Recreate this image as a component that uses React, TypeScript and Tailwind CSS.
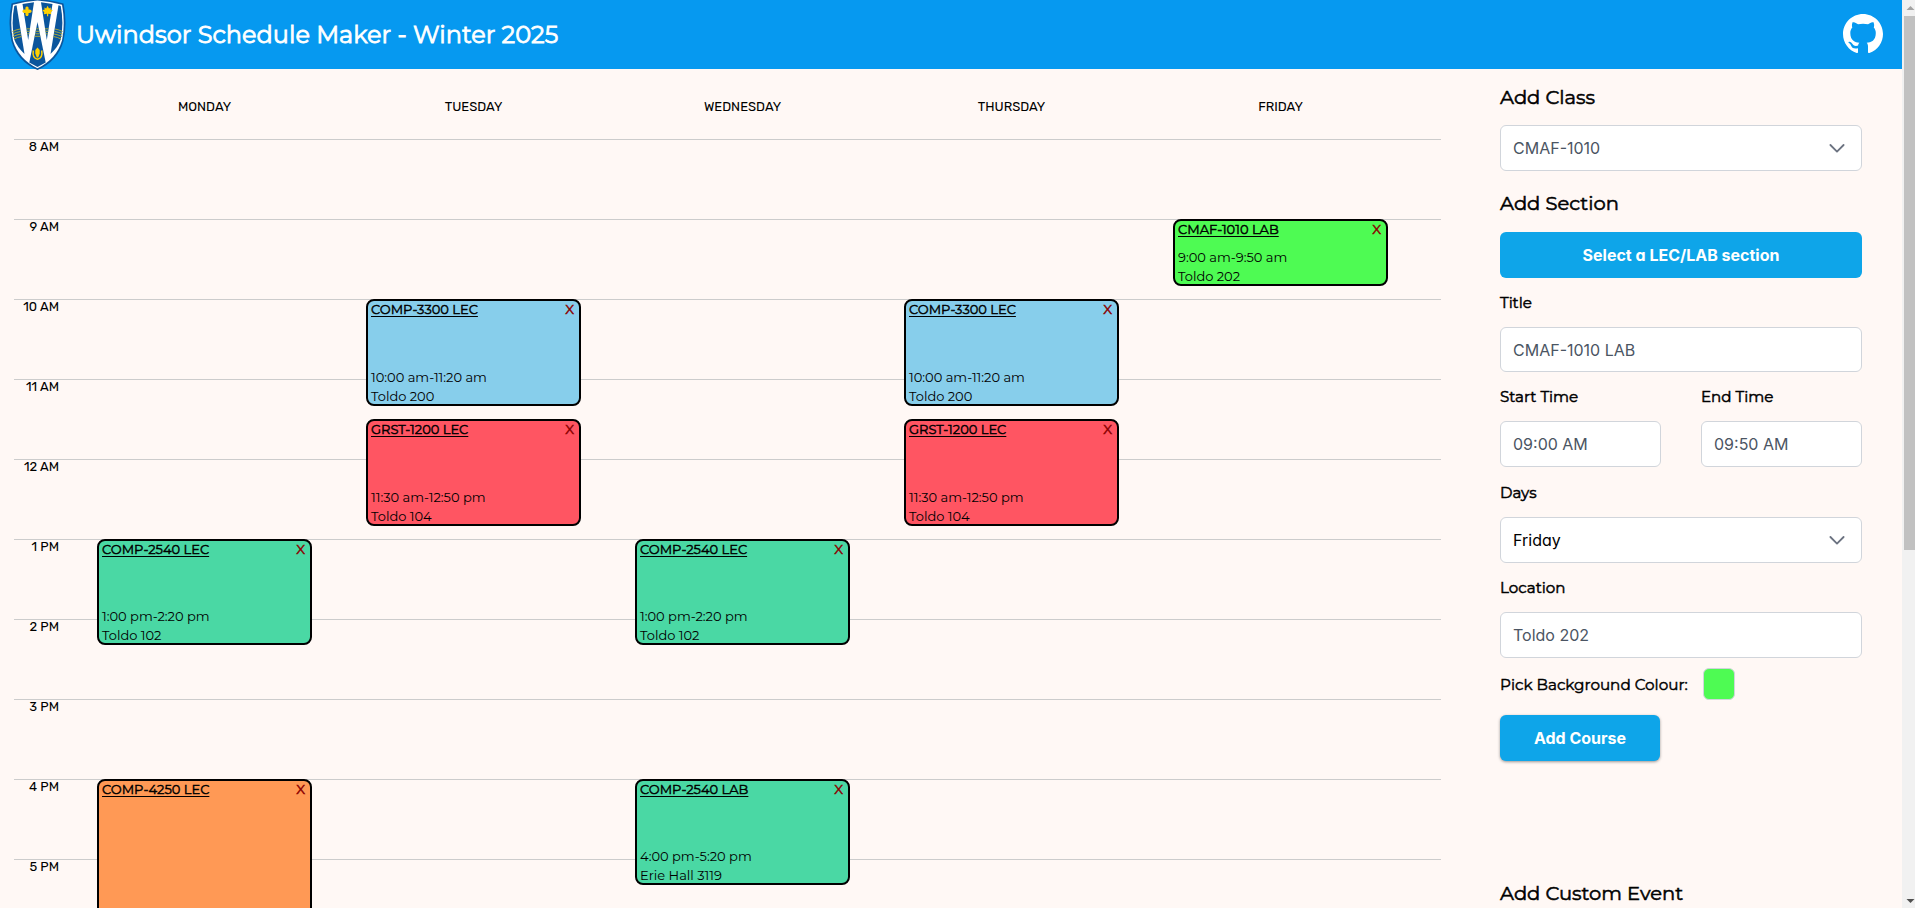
import type { ReactNode } from "react";

type Course = { title: string; day: number; start: number; end: number; time: string; place: string; color: string };

const DAYS = ["MONDAY", "TUESDAY", "WEDNESDAY", "THURSDAY", "FRIDAY"];
const HOURS = ["8 AM", "9 AM", "10 AM", "11 AM", "12 AM", "1 PM", "2 PM", "3 PM", "4 PM", "5 PM"];

// start and end are minutes after midnight
const COURSES: Course[] = [
  { title: "COMP-2540 LEC", day: 0, start: 780, end: 860, time: "1:00 pm-2:20 pm", place: "Toldo 102", color: "bg-[#4ad8a4]" },
  { title: "COMP-4250 LEC", day: 0, start: 960, end: 1130, time: "", place: "", color: "bg-[#ff9955]" },
  { title: "COMP-3300 LEC", day: 1, start: 600, end: 680, time: "10:00 am-11:20 am", place: "Toldo 200", color: "bg-[#87ceeb]" },
  { title: "GRST-1200 LEC", day: 1, start: 690, end: 770, time: "11:30 am-12:50 pm", place: "Toldo 104", color: "bg-[#ff5562]" },
  { title: "COMP-2540 LEC", day: 2, start: 780, end: 860, time: "1:00 pm-2:20 pm", place: "Toldo 102", color: "bg-[#4ad8a4]" },
  { title: "COMP-2540 LAB", day: 2, start: 960, end: 1040, time: "4:00 pm-5:20 pm", place: "Erie Hall 3119", color: "bg-[#4ad8a4]" },
  { title: "COMP-3300 LEC", day: 3, start: 600, end: 680, time: "10:00 am-11:20 am", place: "Toldo 200", color: "bg-[#87ceeb]" },
  { title: "GRST-1200 LEC", day: 3, start: 690, end: 770, time: "11:30 am-12:50 pm", place: "Toldo 104", color: "bg-[#ff5562]" },
  { title: "CMAF-1010 LAB", day: 4, start: 540, end: 590, time: "9:00 am-9:50 am", place: "Toldo 202", color: "bg-[#4efb53]" },
];

function Crest() {
  return (
    <svg className="h-[70px] w-[57px] shrink-0" viewBox="0 0 57 70">
      <path d="M2.500 3.500Q15 0 28.500 -1Q42 0 54.500 3.500Q58.500 23 54.500 41Q49 61 28.500 70Q8 61 2.500 41Q-1.500 23 2.500 3.500Z" fill="#0b559c" />
      <path d="M4 4.800Q16 1.500 28.500 0.500Q41 1.500 53 4.800Q56.500 23 53 40.500Q47.500 59 28.500 68.300Q9.500 59 4 40.500Q0.500 23 4 4.800Z" fill="#fff" />
      <path d="M5.300 6L7.500 5.300L15.500 54Q8 47 5.300 39.500Q2 23 5.300 6Z" fill="#0b559c" />
      <path d="M51.700 6L49.500 5.300L41.500 54Q49 47 51.700 39.500Q55 23 51.700 6Z" fill="#0b559c" />
      <path d="M13.500 4L25 2.300L19.200 40Z" fill="#0b559c" />
      <path d="M32 2.300L43.500 4L37.800 40Z" fill="#0b559c" />
      <path d="M28.500 22L36.700 62.500L28.500 67L20.300 62.500Z" fill="#0b559c" />
      <g fill="none" stroke="#a9a83c" strokeWidth="1">
        <path d="M3.500 31.500Q7 29.700 11 29M3.500 34Q7 32.200 11.500 31.500M4 36.500Q8 34.700 12 34M5 39Q8.500 37.200 12.500 36.500" />
        <path d="M17.500 28.800H21M17.800 31.300H20.600M18.200 33.800H20.200" />
        <path d="M53.500 31.500Q50 29.700 46 29M53.500 34Q50 32.200 45.500 31.500M53 36.500Q49 34.700 45 34M52 39Q48.500 37.200 44.500 36.500" />
        <path d="M39.500 28.800H36M39.200 31.300H36.400M38.800 33.800H36.800" />
        <path d="M27.200 28.800H29.800M26.700 31.300H30.300M26.200 33.800H30.800M25.700 36.300H31.300" />
      </g>
      <path d="M18 6.500q2 0 1.500 3q3-.5 3.200 1.700q-.2 2.200-3.200 1.700q.5 3-1.500 3.200q-2-.2-1.500-3.200q-3 .5-3.200-1.700q.2-2.200 3.200-1.700q-.5-3 1.500-3Z" fill="#ffd100" />
      <path d="M38.600 5.800l1.400 2.700l1.800-1l-.2 2.300l2.200.2l-1.900 2.400l.5 1.800l-3.200-.4v2.500h-1.200v-2.500l-3.200.4l.5-1.800l-1.900-2.400l2.200-.2l-.2-2.300l1.800 1Z" fill="#ffd100" />
      <path d="M28.500 47.500l2.200 2.500v3.500l-1.500 4h-1.400l-1.500-4v-3.500Z" fill="#ffd100" />
      <path d="M24.300 50.500Q23 58 28.500 59.200Q34 58 32.700 50.500" fill="none" stroke="#ffd100" strokeWidth="1.500" />
    </svg>
  );
}

function GithubMark() {
  return (
    <svg className="mt-[14px] h-10 w-10" viewBox="0 0 16 16" fill="#fff">
      <path d="M8 0C3.58 0 0 3.58 0 8c0 3.54 2.29 6.53 5.47 7.59.4.07.55-.17.55-.38 0-.19-.01-.82-.01-1.49-2.01.37-2.53-.49-2.69-.94-.09-.23-.48-.94-.82-1.13-.28-.15-.68-.52-.01-.53.63-.01 1.08.58 1.23.82.72 1.21 1.87.87 2.33.66.07-.52.28-.87.51-1.07-1.78-.2-3.64-.89-3.64-3.95 0-.87.31-1.59.82-2.15-.08-.2-.36-1.02.08-2.12 0 0 .67-.21 2.2.82.64-.18 1.32-.27 2-.27.68 0 1.36.09 2 .27 1.53-1.04 2.2-.82 2.2-.82.44 1.1.16 1.92.08 2.12.51.56.82 1.27.82 2.15 0 3.07-1.87 3.75-3.65 3.95.29.25.54.73.54 1.48 0 1.07-.01 1.93-.01 2.2 0 .21.15.46.55.38A8.01 8.01 0 0 0 16 8c0-4.42-3.58-8-8-8Z" />
    </svg>
  );
}

function CourseBlock({ course }: { course: Course }) {
  const row = (m: number) => (m - 480) / 10 + 1;
  return (
    <div
      className={`mx-auto flex w-[215px] flex-col justify-between rounded-lg border-2 border-black pr-[5px] pl-[3px] text-[13px] leading-[19px] whitespace-nowrap ${course.color}`}
      style={{ gridRow: `${row(course.start)} / ${row(course.end)}`, gridColumn: course.day + 1 }}
    >
      <div className="-mt-px flex justify-between">
        <span className="underline underline-offset-2 [-webkit-text-stroke:0.45px_#000]">{course.title}</span>
        <span className="text-[13.5px] text-[#8b0000] [-webkit-text-stroke:0.45px_#8b0000]">X</span>
      </div>
      <div className="-mb-[2px]">
        <div>{course.time}</div>
        <div>{course.place}</div>
      </div>
    </div>
  );
}

function Calendar() {
  return (
    <section className="ml-[14px] w-[1427px] shrink-0">
      <div className="ml-14 grid h-[70px] w-[1345px] grid-cols-5 items-center pt-[6px] text-center font-[Rubik,Roboto,sans-serif] text-[13px]">
        {DAYS.map((d) => <div key={d}>{d}</div>)}
      </div>
      <div className="grid">
        <div className="col-start-1 row-start-1">
          {HOURS.map((h) => (
            <div key={h} className="h-20 border-t border-[#cccccc]">
              <div className="w-[45px] text-right font-[Rubik,Roboto,sans-serif] text-[13px] leading-[13px]">{h}</div>
            </div>
          ))}
        </div>
        <div className="col-start-1 row-start-1 ml-14 grid w-[1345px] grid-cols-5 grid-rows-[repeat(66,13.3333px)]">
          {COURSES.map((c) => <CourseBlock key={`${c.day}-${c.start}`} course={c} />)}
        </div>
      </div>
    </section>
  );
}

function Field({ children, chevron, dark }: { children: ReactNode; chevron?: boolean; dark?: boolean }) {
  return (
    <div className={`flex h-[46px] w-full items-center justify-between rounded-md border border-[#d1d5db] bg-white pr-3 pl-3 font-[Inter,sans-serif] text-base font-normal [font-feature-settings:'cv11'] ${dark ? "text-black" : "text-[#4b5563]"}`}>
      <span>{children}</span>
      {chevron && (
        <svg className="h-6 w-6" viewBox="0 0 20 20" fill="none" stroke="#6b7280" strokeWidth="1.500" strokeLinecap="round" strokeLinejoin="round">
          <path d="M4.500 7.500l5.500 5.500 5.500-5.500" />
        </svg>
      )}
    </div>
  );
}

const HEADING = "text-[19.5px] font-normal whitespace-nowrap [-webkit-text-stroke:0.55px_#000]";
const LABEL = "block text-[15.1px] leading-6 [-webkit-text-stroke:0.5px_#000]";
const BUTTON = "h-[46px] rounded-md bg-[#0ea5e9] font-[Inter,sans-serif] text-base font-bold text-white [font-feature-settings:'cv11']";

function Sidebar() {
  return (
    <aside className="ml-[59px] flex w-[362px] shrink-0 flex-col">
      <h2 className={`mt-[13px] h-[43px] leading-[30px] ${HEADING}`}>Add Class</h2>
      <Field chevron>CMAF-1010</Field>
      <h2 className={`mt-[17px] h-[44px] leading-[30px] ${HEADING}`}>Add Section</h2>
      <button className={BUTTON}>Select a LEC/LAB section</button>
      <label className={`mt-[13px] h-9 ${LABEL}`}>Title</label>
      <Field>CMAF-1010 LAB</Field>
      <div className="flex justify-between">
        <div className="w-[161px]">
          <label className={`mt-[13px] h-9 ${LABEL}`}>Start Time</label>
          <Field>09:00 AM</Field>
        </div>
        <div className="w-[161px]">
          <label className={`mt-[13px] h-9 ${LABEL}`}>End Time</label>
          <Field>09:50 AM</Field>
        </div>
      </div>
      <label className={`mt-[14px] h-9 ${LABEL}`}>Days</label>
      <Field chevron dark>Friday</Field>
      <label className={`mt-[13px] h-9 ${LABEL}`}>Location</label>
      <Field>Toldo 202</Field>
      <div className="mt-[10px] flex h-8 items-center">
        <label className="mt-[2px] w-[203px] text-[15.2px] whitespace-nowrap [-webkit-text-stroke:0.45px_#000]">Pick Background Colour:</label>
        <div className="h-8 w-8 rounded-md border border-[#d1d5db] bg-[#4efb53]" />
      </div>
      <button className={`mt-[15px] w-40 shadow-[0_1px_3px_rgba(0,0,0,0.4)] ${BUTTON}`}>Add Course</button>
      <h2 className={`mt-[117px] leading-[30px] ${HEADING}`}>Add Custom Event</h2>
    </aside>
  );
}

function Scrollbar() {
  return (
    <div className="flex h-full w-[13px] shrink-0 flex-col items-end justify-between bg-[#f1f1f1]">
      <div>
        <svg className="block h-4 w-[11px]" viewBox="0 0 11 16"><path d="M2.500 10L6.500 6L10.500 10Z" fill="#a3a3a3" /></svg>
        <div className="h-[534px] w-[11px] bg-[#c1c1c1]" />
      </div>
      <svg className="h-4 w-[11px]" viewBox="0 0 11 16"><path d="M2.500 7L6.500 11L10.500 7Z" fill="#505050" /></svg>
    </div>
  );
}

export default function App() {
  return (
    <div className="flex h-[908px] w-[1915px] overflow-hidden bg-[#fff8f5] font-[Montserrat,Inter,sans-serif] text-black">
      <div className="flex h-full w-[1902px] shrink-0 flex-col">
        <header className="flex h-[69px] shrink-0 items-start justify-between bg-[#0699f0] pr-[19px] pl-[9px]">
          <div className="flex">
            <Crest />
            <h1 className="ml-[10px] text-[24px] leading-[70px] font-normal whitespace-nowrap text-white [-webkit-text-stroke:0.8px_#fff]">Uwindsor Schedule Maker - Winter 2025</h1>
          </div>
          <GithubMark />
        </header>
        <main className="flex min-h-0 flex-1 overflow-hidden">
          <Calendar />
          <Sidebar />
        </main>
      </div>
      <Scrollbar />
    </div>
  );
}
